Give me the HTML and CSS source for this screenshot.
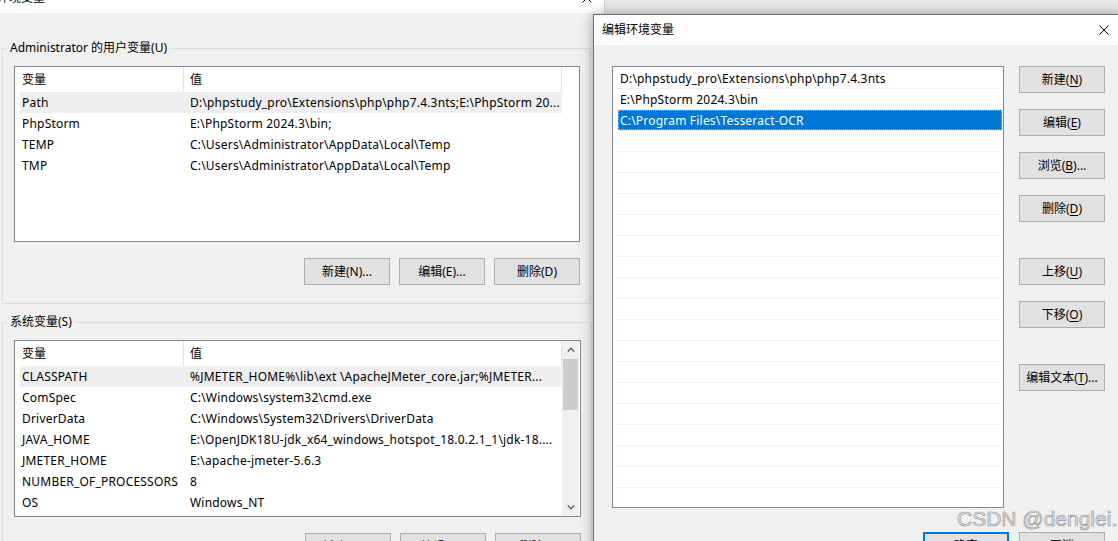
FILE: index.html
```html
<!DOCTYPE html>
<html lang="zh-CN">
<head>
  <meta charset="UTF-8">
  <meta name="viewport" content="width=device-width, initial-scale=1">
  <title>环境变量</title>
  <link rel="stylesheet" href="styles.css">
</head>
<body>
  <!-- 环境变量 -->
  <div class="window env-window">
    <div class="titlebar">
      <span>环境变量</span>
      <svg class="close" width="10" height="10" viewBox="0 0 10 10"><path d="M0.5 0.5L9.5 9.5M9.5 0.5L0.5 9.5" stroke="#000" stroke-width="1"/></svg>
    </div>
    <div class="env-body">
      <fieldset class="group">
        <legend>Administrator 的用户变量(U)</legend>
        <div class="listview user-list">
          <div class="lv-main">
            <div class="lv-head"><span class="col-name">变量</span><span class="col-value">值</span></div>
            <div class="lv-row selected"><span class="col-name">Path</span><span class="col-value">D:\phpstudy_pro\Extensions\php\php7.4.3nts;E:\PhpStorm 20...</span></div>
            <div class="lv-row"><span class="col-name">PhpStorm</span><span class="col-value">E:\PhpStorm 2024.3\bin;</span></div>
            <div class="lv-row"><span class="col-name">TEMP</span><span class="col-value">C:\Users\Administrator\AppData\Local\Temp</span></div>
            <div class="lv-row"><span class="col-name">TMP</span><span class="col-value">C:\Users\Administrator\AppData\Local\Temp</span></div>
          </div>
        </div>
        <div class="button-row">
          <button class="btn">新建(N)...</button>
          <button class="btn">编辑(E)...</button>
          <button class="btn">删除(D)</button>
        </div>
      </fieldset>

      <fieldset class="group">
        <legend>系统变量(S)</legend>
        <div class="listview system-list">
          <div class="lv-main">
            <div class="lv-head"><span class="col-name">变量</span><span class="col-value">值</span></div>
            <div class="lv-row selected"><span class="col-name">CLASSPATH</span><span class="col-value">%JMETER_HOME%\lib\ext \ApacheJMeter_core.jar;%JMETER...</span></div>
            <div class="lv-row"><span class="col-name">ComSpec</span><span class="col-value">C:\Windows\system32\cmd.exe</span></div>
            <div class="lv-row"><span class="col-name">DriverData</span><span class="col-value">C:\Windows\System32\Drivers\DriverData</span></div>
            <div class="lv-row"><span class="col-name">JAVA_HOME</span><span class="col-value">E:\OpenJDK18U-jdk_x64_windows_hotspot_18.0.2.1_1\jdk-18....</span></div>
            <div class="lv-row"><span class="col-name">JMETER_HOME</span><span class="col-value">E:\apache-jmeter-5.6.3</span></div>
            <div class="lv-row"><span class="col-name">NUMBER_OF_PROCESSORS</span><span class="col-value">8</span></div>
            <div class="lv-row"><span class="col-name">OS</span><span class="col-value">Windows_NT</span></div>
          </div>
          <div class="vscroll">
            <div class="scroll-btn"><svg width="8" height="5" viewBox="0 0 8 5"><path d="M0.8 4.4L4 1.2L7.2 4.4" fill="none" stroke="#606060" stroke-width="1.4"/></svg></div>
            <div class="scroll-track"><div class="scroll-thumb"></div></div>
            <div class="scroll-btn"><svg width="8" height="5" viewBox="0 0 8 5"><path d="M0.8 0.6L4 3.8L7.2 0.6" fill="none" stroke="#606060" stroke-width="1.4"/></svg></div>
          </div>
        </div>
        <div class="button-row">
          <button class="btn">新建(W)...</button>
          <button class="btn">编辑(I)...</button>
          <button class="btn">删除(L)</button>
        </div>
      </fieldset>
    </div>
  </div>

  <!-- 编辑环境变量 -->
  <div class="window edit-window">
    <div class="titlebar">
      <span>编辑环境变量</span>
      <svg class="close" width="10" height="10" viewBox="0 0 10 10"><path d="M0.5 0.5L9.5 9.5M9.5 0.5L0.5 9.5" stroke="#000" stroke-width="1"/></svg>
    </div>
    <div class="edit-body">
      <div class="path-list">
        <div class="path-rows">
          <div class="path-row">D:\phpstudy_pro\Extensions\php\php7.4.3nts</div>
          <div class="path-row">E:\PhpStorm 2024.3\bin</div>
          <div class="path-row selected">C:\Program Files\Tesseract-OCR</div>
        </div>
      </div>
      <div class="side-buttons">
        <button class="btn">新建(<u>N</u>)</button>
        <button class="btn">编辑(<u>E</u>)</button>
        <button class="btn">浏览(<u>B</u>)...</button>
        <button class="btn">删除(<u>D</u>)</button>
        <button class="btn spaced">上移(<u>U</u>)</button>
        <button class="btn">下移(<u>O</u>)</button>
        <button class="btn spaced">编辑文本(<u>T</u>)...</button>
      </div>
      <div class="dialog-footer">
        <button class="btn default">确定</button>
        <button class="btn">取消</button>
      </div>
    </div>
  </div>

  <div class="watermark">CSDN @denglei.</div>
</body>
</html>
```

FILE: styles.css
```css
* { box-sizing: border-box; }
body { margin: 0; width: 1118px; height: 541px; overflow: hidden; position: relative; background: #e8e8e8; font: 12px/16px "Noto Sans", "Noto Sans CJK SC", sans-serif; color: #000; }

.window { position: absolute; background: #f0f0f0; }
.titlebar { height: 30px; background: #fff; display: flex; align-items: center; justify-content: space-between; }
.btn { width: 86px; height: 27px; padding: 0; background: #e1e1e1; border: 1px solid #adadad; font: inherit; color: #000; }
.btn u { text-decoration: underline; text-underline-offset: 2px; }

/* left dialog: user + system variables */
.env-window { left: -8px; top: -17px; width: 613px; height: 600px; border-right: 1px solid #d4d4d4; }
.env-window .titlebar { padding: 0 12px 0 5px; }
.env-body { padding: 27px 0 0 10px; }
.group { width: 589px; margin: 0; padding: 10px 10px 18px 11px; border: 1px solid #dcdcdc; }
.group + .group { margin-top: 10px; }
.group legend { margin-left: -7px; padding: 0 3px; line-height: 16px; }

.listview { display: flex; background: #fff; border: 1px solid #828790; }
.user-list { height: 176px; }
.system-list { height: 177px; }
.lv-main { flex: 1; padding-left: 5px; }
.lv-head, .lv-row { display: flex; width: 542px; white-space: nowrap; }
.lv-head { height: 25px; line-height: 25px; }
.lv-head span { border-right: 1px solid #e5e5e5; }
.lv-row { height: 21px; line-height: 21px; letter-spacing: 0.2px; }
.lv-row.selected { background: #eeeeee; }
.col-name { width: 164px; padding-left: 2px; overflow: hidden; }
.col-value { width: 378px; padding-left: 6px; overflow: hidden; }

.vscroll { width: 17px; margin-right: 1px; background: #f0f0f0; display: flex; flex-direction: column; }
.scroll-btn { height: 17px; display: flex; align-items: center; justify-content: center; }
.scroll-track { flex: 1; }
.scroll-thumb { height: 51px; margin: 1px 1px 0; background: #cdcdcd; }

.button-row { display: flex; justify-content: flex-end; gap: 9px; margin-top: 16px; }

/* right dialog: edit one variable */
.edit-window { left: 593px; top: 14px; width: 528px; height: 560px; border: 1px solid #6f6f6f; box-shadow: 0 0 12px rgba(0, 0, 0, 0.35); }
.edit-window .titlebar { padding: 0 11px 0 8px; }
.edit-body { display: grid; grid-template-columns: 392px 86px; column-gap: 15px; padding: 21px 0 0 18px; }
.path-list { height: 442px; padding: 1px; background: #fff; border: 1px solid #828790; }
.path-rows { height: 100%; background: repeating-linear-gradient(#fff 0 20px, #f0f0f0 20px 21px); }
.path-row { height: 20px; margin: 0 0 1px 4px; padding-left: 2px; line-height: 21px; letter-spacing: 0.2px; white-space: nowrap; }
.path-row.selected { background: #0078d7; color: #fff; outline: 1px dotted #ff9b45; outline-offset: -1px; }

.side-buttons { display: flex; flex-direction: column; gap: 16px; }
.side-buttons .spaced { margin-top: 20px; }

.dialog-footer { grid-column: 1 / -1; display: flex; justify-content: flex-end; gap: 10px; margin-top: 24px; }
.btn.default { border: 2px solid #0078d7; }

.watermark { position: absolute; left: 957px; top: 508px; font: 21px/1 "Liberation Sans", sans-serif; color: #e6e6e6; -webkit-text-stroke: 0.7px #9c9c9c; white-space: nowrap; }
```
